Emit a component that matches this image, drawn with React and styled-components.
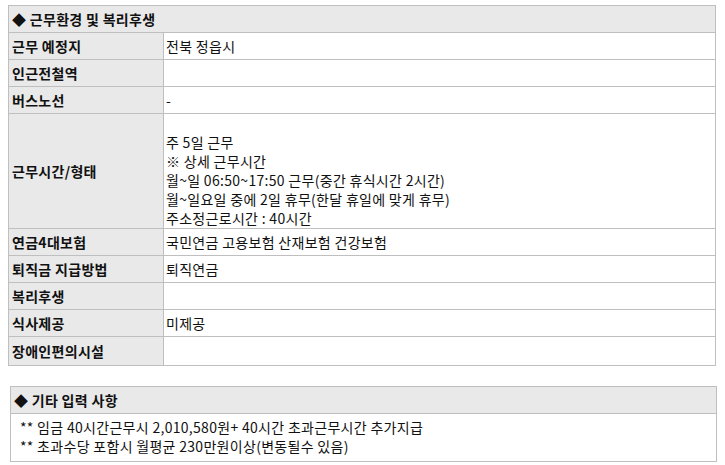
import React from "react";
import styled, { createGlobalStyle } from "styled-components";

const GlobalStyle = createGlobalStyle`
  body {
    margin: 0;
    background: #fff;
    font-family: "Noto Sans CJK KR", "Noto Sans", sans-serif;
    font-size: 14px;
    letter-spacing: 0.3px;
    color: #111;
  }
  * {
    box-sizing: border-box;
  }
`;

const rows = [
  { label: "근무 예정지", value: "전북 정읍시" },
  { label: "인근전철역", value: "" },
  { label: "버스노선", value: "-" },
  {
    label: "근무시간/형태",
    lines: [
      "",
      "주 5일 근무",
      "※ 상세 근무시간",
      "월~일 06:50~17:50 근무(중간 휴식시간 2시간)",
      "월~일요일 중에 2일 휴무(한달 휴일에 맞게 휴무)",
      "주소정근로시간 : 40시간",
    ],
  },
  { label: "연금4대보험", value: "국민연금 고용보험 산재보험 건강보험" },
  { label: "퇴직금 지급방법", value: "퇴직연금" },
  { label: "복리후생", value: "" },
  { label: "식사제공", value: "미제공" },
  { label: "장애인편의시설", value: "" },
];

const notes = [
  "** 임금 40시간근무시 2,010,580원+ 40시간 초과근무시간 추가지급",
  "** 초과수당 포함시 월평균 230만원이상(변동될수 있음)",
];

const App = () => {
  return (
    <Page>
      <GlobalStyle />
      <Box $width={708} $left={8}>
        <BoxHeader>◆ 근무환경 및 복리후생</BoxHeader>
        {rows.map((row) => (
          <Row key={row.label}>
            <Label>{row.label}</Label>
            <Value>
              {row.lines
                ? row.lines.map((line, i) => <Line key={i}>{line || "\u00a0"}</Line>)
                : row.value}
            </Value>
          </Row>
        ))}
      </Box>
      <Box $width={707} $left={10}>
        <BoxHeader>◆ 기타 입력 사항</BoxHeader>
        <Notes>
          {notes.map((n) => (
            <Line key={n}>{n}</Line>
          ))}
        </Notes>
      </Box>
    </Page>
  );
};

const Page = styled.div`
  display: flex;
  flex-direction: column;
  gap: 20px;
  padding-top: 5px;
`;

const Box = styled.section`
  width: ${(p) => p.$width}px;
  margin-left: ${(p) => p.$left}px;
  border: 1px solid #bfbfbf;
`;

const BoxHeader = styled.div`
  height: 27px;
  display: flex;
  align-items: center;
  padding-left: 3px;
  background: #e9e9e9;
  border-bottom: 1px solid #bfbfbf;
  font-weight: bold;
  color: #111;
`;

const Row = styled.div`
  display: grid;
  grid-template-columns: 155px 1fr;
  border-bottom: 1px solid #bfbfbf;

  &:last-child {
    border-bottom: none;
    min-height: 28px;
  }
`;

const Label = styled.div`
  display: flex;
  align-items: center;
  padding-left: 3px;
  min-height: 26px;
  background: #e9e9e9;
  border-right: 1px solid #bfbfbf;
  font-weight: bold;
  color: #111;
`;

const Value = styled.div`
  display: flex;
  flex-direction: column;
  justify-content: center;
  padding-left: 2px;
  min-height: 26px;
  color: #111;
`;

const Line = styled.div`
  line-height: 19px;
  white-space: nowrap;
`;

const Notes = styled.div`
  padding: 4px 0 5px 9px;
`;

export default App;
